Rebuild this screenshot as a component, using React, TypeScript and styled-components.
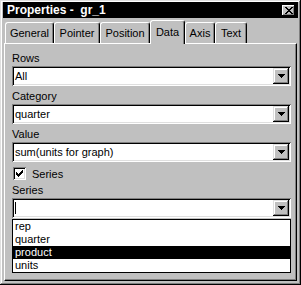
import React from 'react';
import styled, { createGlobalStyle } from 'styled-components';

const Global = createGlobalStyle`
  html, body { margin: 0; padding: 0; background: #c0c0c0; }
  body { font-family: "Liberation Sans", Arial, sans-serif; }
`;

const Window = styled.div`
  box-sizing: border-box;
  width: 301px;
  height: 285px;
  background: #c0c0c0;
  padding: 2px 3px 3px 3px;
  box-shadow: inset -1px -1px #000, inset 1px 1px #dfdfdf, inset -2px -2px #808080, inset 2px 2px #fff;
  display: flex;
  flex-direction: column;
`;

const TitleBar = styled.div`
  height: 16px;
  flex: none;
  background: #000;
  color: #fff;
  display: flex;
  align-items: center;
  justify-content: space-between;
  padding: 0 3px 0 4px;
  font-weight: bold;
  font-size: 12px;
  white-space: pre;
`;

const CloseButton = styled.div`
  box-sizing: border-box;
  width: 13px;
  height: 11px;
  background: #c0c0c0;
  box-shadow: inset -1px -1px #000, inset 1px 1px #fff, inset -2px -2px #808080;
  display: flex;
  align-items: center;
  justify-content: center;
`;

const TabRow = styled.div`
  flex: none;
  height: 23px;
  margin-top: 2px;
  padding-left: 2px;
  display: flex;
  align-items: flex-end;
`;

const Tab = styled.div<{ $active?: boolean; $w: number }>`
  box-sizing: border-box;
  position: relative;
  z-index: ${p => (p.$active ? 1 : 0)};
  width: ${p => p.$w}px;
  height: ${p => (p.$active ? 24 : 21)}px;
  margin-bottom: ${p => (p.$active ? -1 : 0)}px;
  background: #c0c0c0;
  border-top: 1px solid #fff;
  border-left: 1px solid #fff;
  border-right: 1px solid #000;
  border-radius: 3px 3px 0 0;
  box-shadow: inset -1px 0 #808080;
  display: flex;
  align-items: center;
  justify-content: center;
  padding-bottom: ${p => (p.$active ? 2 : 0)}px;
  font-size: 11px;
  color: #000;
`;

const Panel = styled.div`
  flex: 1;
  margin: 0 1px 1px 1px;
  background: #c0c0c0;
  border-top: 1px solid #fff;
  border-left: 1px solid #fff;
  border-right: 1px solid #000;
  border-bottom: 1px solid #000;
  box-shadow: inset -1px -1px #808080;
  padding: 8px 5px 0 7px;
  display: flex;
  flex-direction: column;
`;

const Label = styled.div<{ $gap?: number }>`
  height: 14px;
  line-height: 13px;
  font-size: 11px;
  color: #000;
  margin-top: ${p => p.$gap ?? 0}px;
`;

const Combo = styled.div`
  box-sizing: border-box;
  height: 20px;
  flex: none;
  background: #fff;
  box-shadow: inset 1px 1px #808080, inset -1px -1px #fff, inset 2px 2px #000, inset -2px -2px #dfdfdf;
  padding: 2px 2px 2px 3px;
  display: flex;
  align-items: center;
`;

const ComboText = styled.div`
  flex: 1;
  font-size: 11px;
  line-height: 13px;
  color: #000;
`;

const Caret = styled.div`
  width: 1px;
  height: 12px;
  background: #000;
`;

const DropButton = styled.div`
  box-sizing: border-box;
  width: 16px;
  height: 16px;
  flex: none;
  background: #c0c0c0;
  box-shadow: inset -1px -1px #000, inset 1px 1px #dfdfdf, inset -2px -2px #808080, inset 2px 2px #fff;
  display: flex;
  align-items: center;
  justify-content: center;
`;

const CheckRow = styled.div`
  height: 15px;
  margin-top: 4px;
  display: flex;
  align-items: center;
  gap: 6px;
  font-size: 11px;
  padding-left: 1px;
`;

const CheckBox = styled.div`
  box-sizing: border-box;
  width: 13px;
  height: 13px;
  background: #fff;
  box-shadow: inset 1px 1px #808080, inset -1px -1px #fff, inset 2px 2px #000, inset -2px -2px #dfdfdf;
  display: flex;
  align-items: center;
  justify-content: center;
`;

const List = styled.div`
  margin-top: 1px;
  border: 1px solid #000;
  background: #fff;
  display: flex;
  flex-direction: column;
`;

const ListItem = styled.div<{ $selected?: boolean }>`
  height: 13px;
  line-height: 13px;
  font-size: 11px;
  padding-left: 2px;
  background: ${p => (p.$selected ? '#000' : '#fff')};
  color: ${p => (p.$selected ? '#fff' : '#000')};
`;

const Arrow = () => (
  <svg width="7" height="4" viewBox="0 0 7 4" shapeRendering="crispEdges">
    <rect x="0" y="0" width="7" height="1" fill="#000" />
    <rect x="1" y="1" width="5" height="1" fill="#000" />
    <rect x="2" y="2" width="3" height="1" fill="#000" />
    <rect x="3" y="3" width="1" height="1" fill="#000" />
  </svg>
);

const Check = () => (
  <svg width="7" height="7" viewBox="0 0 7 7" shapeRendering="crispEdges">
    <rect x="6" y="0" width="1" height="1" fill="#000" />
    <rect x="5" y="1" width="2" height="1" fill="#000" />
    <rect x="0" y="2" width="1" height="1" fill="#000" />
    <rect x="4" y="2" width="3" height="1" fill="#000" />
    <rect x="0" y="3" width="2" height="1" fill="#000" />
    <rect x="3" y="3" width="3" height="1" fill="#000" />
    <rect x="0" y="4" width="5" height="1" fill="#000" />
    <rect x="1" y="5" width="3" height="1" fill="#000" />
    <rect x="2" y="6" width="1" height="1" fill="#000" />
  </svg>
);

const CloseX = () => (
  <svg width="8" height="7" viewBox="0 0 8 7" shapeRendering="crispEdges">
    <rect x="0" y="0" width="2" height="1" fill="#000" />
    <rect x="6" y="0" width="2" height="1" fill="#000" />
    <rect x="1" y="1" width="2" height="1" fill="#000" />
    <rect x="5" y="1" width="2" height="1" fill="#000" />
    <rect x="2" y="2" width="4" height="1" fill="#000" />
    <rect x="3" y="3" width="2" height="1" fill="#000" />
    <rect x="2" y="4" width="4" height="1" fill="#000" />
    <rect x="1" y="5" width="2" height="1" fill="#000" />
    <rect x="5" y="5" width="2" height="1" fill="#000" />
    <rect x="0" y="6" width="2" height="1" fill="#000" />
    <rect x="6" y="6" width="2" height="1" fill="#000" />
  </svg>
);

const tabs = [
  { name: 'General', w: 49 },
  { name: 'Pointer', w: 46 },
  { name: 'Position', w: 50 },
  { name: 'Data', w: 35, active: true },
  { name: 'Axis', w: 30 },
  { name: 'Text', w: 32 },
];

const ComboBox = ({ value, caret }: { value?: string; caret?: boolean }) => (
  <Combo>
    <ComboText>{caret ? <Caret /> : value}</ComboText>
    <DropButton>
      <Arrow />
    </DropButton>
  </Combo>
);

export default function App() {
  const items = ['rep', 'quarter', 'product', 'units'];
  return (
    <>
      <Global />
      <Window>
        <TitleBar>
          <span>Properties -  gr_1</span>
          <CloseButton>
            <CloseX />
          </CloseButton>
        </TitleBar>
        <TabRow>
          {tabs.map(t => (
            <Tab key={t.name} $w={t.w} $active={t.active}>
              {t.name}
            </Tab>
          ))}
        </TabRow>
        <Panel>
          <Label>Rows</Label>
          <ComboBox value="All" />
          <Label $gap={4}>Category</Label>
          <ComboBox value="quarter" />
          <Label $gap={4}>Value</Label>
          <ComboBox value="sum(units for graph)" />
          <CheckRow>
            <CheckBox>
              <Check />
            </CheckBox>
            <span>Series</span>
          </CheckRow>
          <Label $gap={3}>Series</Label>
          <ComboBox caret />
          <List>
            {items.map(i => (
              <ListItem key={i} $selected={i === 'product'}>
                {i}
              </ListItem>
            ))}
          </List>
        </Panel>
      </Window>
    </>
  );
}
